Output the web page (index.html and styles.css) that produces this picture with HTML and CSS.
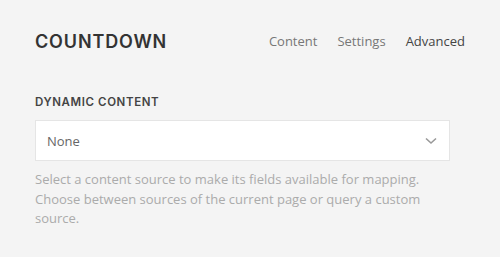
FILE: index.html
```html
<!DOCTYPE html>
<html>
<head>
<meta charset="utf-8">
<link rel="stylesheet" href="styles.css">
</head>
<body>
<div class="panel">
  <header class="head">
    <h1 class="title">COUNTDOWN</h1>
    <nav class="tabs">
      <span class="tab">Content</span>
      <span class="tab">Settings</span>
      <span class="tab active">Advanced</span>
    </nav>
  </header>
  <section class="field">
    <div class="label">DYNAMIC CONTENT</div>
    <div class="select">
      <span class="value">None</span>
      <svg class="chev" width="12" height="8" viewBox="0 0 12 8"><polyline points="1,1.5 6,6 11,1.5" fill="none" stroke="#999" stroke-width="1.6"/></svg>
    </div>
    <p class="desc">Select a content source to make its fields available for mapping. Choose between sources of the current page or query a custom source.</p>
  </section>
</div>
</body>
</html>
```
FILE: styles.css
```css
html, body { margin: 0; padding: 0; }
body {
  background: #f4f4f4;
  width: 500px;
  height: 257px;
  overflow: hidden;
  font-family: "Open Sans", sans-serif;
}
.panel {
  padding: 28px 35px 0 35px;
  width: 415px;
}
.head {
  display: flex;
  align-items: center;
  justify-content: space-between;
  height: 26px;
}
.title {
  margin: 0;
  font-family: Inter, sans-serif;
  font-weight: 600;
  font-size: 18px;
  color: #333;
  letter-spacing: 0.85px;
}
.tabs {
  display: flex;
  gap: 20px;
  margin-right: -15px;
}
.tab {
  font-size: 13px;
  color: #777;
}
.tab.active { color: #444; }
.field { margin-top: 41px; }
.label {
  font-family: Inter, sans-serif;
  font-weight: 600;
  font-size: 11.5px;
  color: #444;
  letter-spacing: 0.6px;
  line-height: 14px;
}
.select {
  margin-top: 11px;
  height: 38px;
  background: #fff;
  border: 1px solid #e5e5e5;
  display: flex;
  align-items: center;
  justify-content: space-between;
  padding: 1px 12px 0 11px;
  box-sizing: content-box;
}
.value { font-size: 13px; color: #666; }
.chev { display: block; }
.desc {
  margin: 9px 0 0 0;
  font-size: 13px;
  line-height: 19.5px;
  color: #ababab;
}
```
